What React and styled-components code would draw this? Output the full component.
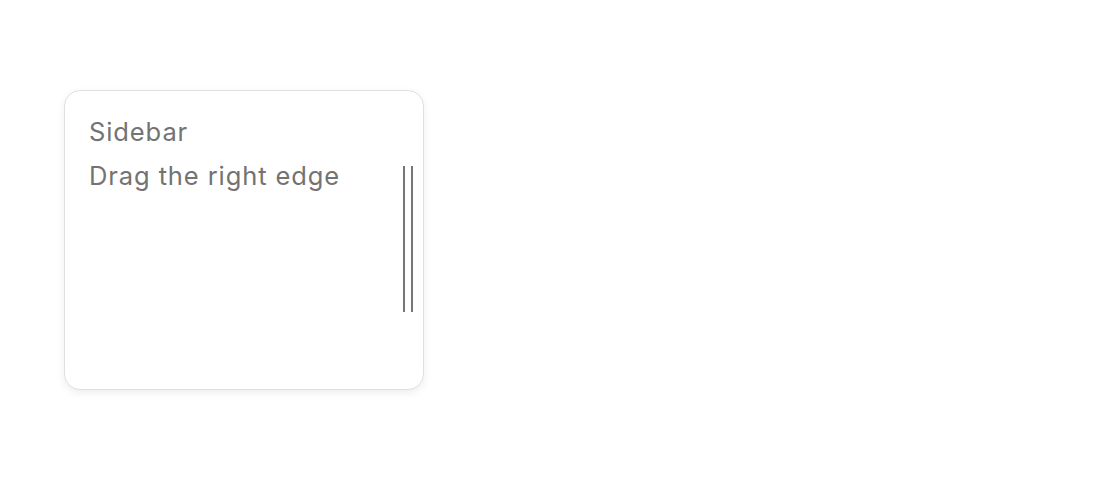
import React from "react";
import styled, { createGlobalStyle } from "styled-components";

const Global = createGlobalStyle`
  html, body { margin: 0; padding: 0; background: #ffffff; }
  body { font-family: Inter, "Liberation Sans", sans-serif; }
`;

const Page = styled.div`
  width: 1120px;
  height: 480px;
  box-sizing: border-box;
  padding: 90px 0 0 64px;
`;

const Card = styled.div`
  position: relative;
  box-sizing: border-box;
  width: 360px;
  height: 300px;
  padding: 23px 24px;
  border: 1.5px solid #e0e0e0;
  border-radius: 16px;
  background: #ffffff;
  box-shadow: 0 3px 8px rgba(0, 0, 0, 0.07);
  display: flex;
  flex-direction: column;
  gap: 8px;
`;

const Line = styled.div`
  font-size: 25.5px;
  line-height: 36px;
  color: #737373;
  letter-spacing: 0.9px;
`;

const Handle = styled.div`
  position: absolute;
  right: 10px;
  top: 75px;
  width: 6px;
  height: 146px;
  border-left: 2px solid #767676;
  border-right: 2px solid #767676;
  cursor: ew-resize;
`;

export default function App() {
  return (
    <>
      <Global />
      <Page>
        <Card>
          <Line>Sidebar</Line>
          <Line>Drag the right edge</Line>
          <Handle />
        </Card>
      </Page>
    </>
  );
}
